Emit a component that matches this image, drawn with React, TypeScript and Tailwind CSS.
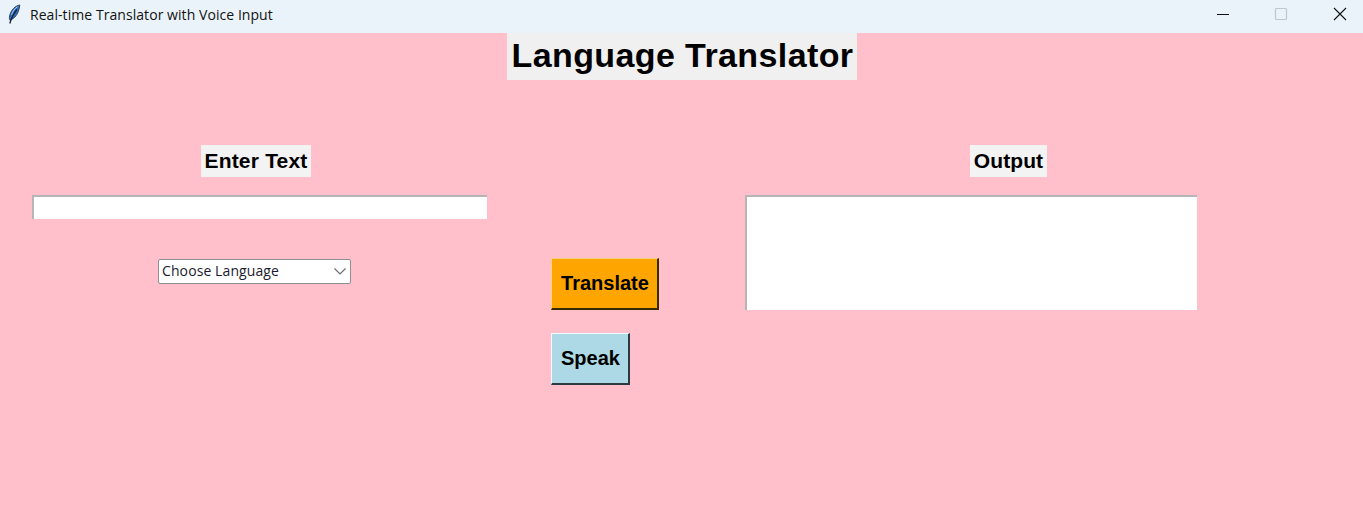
import React from 'react';

const Feather = () => (
  <svg width="14" height="21" viewBox="0 0 14 21" className="ml-[7px]">
    <path d="M12.8 1C8.5 1.6 3.8 6 2.6 12c-.4 2-.2 3.4.3 4.2C6.2 15.4 10 11.5 11.4 7.2c.7-2.2 1.3-4.2 1.4-6.2z" fill="#2f6fc0" stroke="#26384f" strokeWidth="0.9" />
    <path d="M10.5 2.8C8 4.2 5.6 7.2 4.6 10.8" fill="none" stroke="#a9cdf0" strokeWidth="1" />
    <path d="M10 5.5C7 9 4.6 13 2.8 19.5" fill="none" stroke="#10202f" strokeWidth="1.3" />
  </svg>
);

const WindowControls = () => (
  <div className="flex items-center pb-[5px]">
    <svg width="14" height="14" viewBox="0 0 14 14" className="mr-[44px]">
      <path d="M1 7.5h12" stroke="#111" strokeWidth="1" />
    </svg>
    <svg width="14" height="14" viewBox="0 0 14 14" className="mr-[45px]">
      <rect x="1.5" y="1.5" width="11" height="11" rx="1" fill="none" stroke="#c0c7cb" strokeWidth="1.2" />
    </svg>
    <svg width="14" height="14" viewBox="0 0 14 14" className="mr-[16px]">
      <path d="M1 1l12 12M13 1L1 13" stroke="#111" strokeWidth="1.1" />
    </svg>
  </div>
);

const Label = ({ text, className }: { text: string; className: string }) => (
  <div className={`flex h-[32px] items-center justify-center bg-[#f3f3f3] pb-[1px] text-[21px] font-bold text-black ${className}`}>
    {text}
  </div>
);

const App = () => {
  return (
    <div className="flex h-[529px] w-[1363px] flex-col overflow-hidden bg-[#ffc0cb] font-['Liberation_Sans',Arial,sans-serif]">
      <div className="flex h-[33px] items-center justify-between bg-[#eaf3fa]">
        <div className="flex items-center pb-[5px]">
          <Feather />
          <span className="ml-[9px] font-['Open_Sans',sans-serif] text-[14px] tracking-[0.06px] text-[#111]">
            Real-time Translator with Voice Input
          </span>
        </div>
        <WindowControls />
      </div>

      <div className="flex justify-center">
        <h1 className="flex h-[47px] w-[350px] items-center justify-center bg-[#f0f0f0] pb-[2px] pl-[2px] text-[34px] font-bold tracking-[0.4px] text-black">
          Language Translator
        </h1>
      </div>

      <div className="mt-[65px] flex pl-[32px]">
        <div className="flex w-[455px] flex-col">
          <Label text="Enter Text" className="ml-[169px] w-[110px] tracking-[0.2px]" />
          <input
            className="mt-[18px] h-[24px] w-[455px] border-t-2 border-l-2 border-[#b5b5b5] bg-white outline-none"
            readOnly
          />
          <div className="mt-[40px] ml-[126px] flex h-[25px] w-[193px] items-center justify-between rounded-[2px] border border-[#8f8f8f] bg-white px-[3px] pb-[2px] font-['Open_Sans',sans-serif] text-[14px] tracking-[0.1px] text-[#1a1a2e]">
            <span>Choose Language</span>
            <svg width="14" height="9" viewBox="0 0 14 9" className="mt-[2px]">
              <path d="M1.5 1.5l5.5 5.5 5.5-5.5" fill="none" stroke="#6d6d6d" strokeWidth="1.2" />
            </svg>
          </div>
        </div>

        <div className="ml-[64px] flex w-[194px] flex-col items-start pt-[113px]">
          <button className="h-[52px] w-[108px] border-t border-r-2 border-b-2 border-l border-t-[#ffd27a] border-r-[#3a2a00] border-b-[#3a2a00] border-l-[#ffd27a] bg-[#ffa500] pb-[2px] pl-[1px] text-[20px] font-bold text-black">
            Translate
          </button>
          <button className="mt-[23px] h-[52px] w-[79px] border-t border-r-2 border-b-2 border-l border-t-[#f0fbff] border-r-[#2a3a40] border-b-[#2a3a40] border-l-[#f0fbff] bg-[#add8e6] pb-[2px] pl-[1px] text-[20px] font-bold text-black">
            Speak
          </button>
        </div>

        <div className="flex w-[452px] flex-col">
          <Label text="Output" className="ml-[225px] w-[77px] tracking-[0.1px]" />
          <div className="mt-[18px] h-[115px] w-[452px] border-t-2 border-l-2 border-[#b5b5b5] bg-white" />
        </div>
      </div>
    </div>
  );
};

export default App;
